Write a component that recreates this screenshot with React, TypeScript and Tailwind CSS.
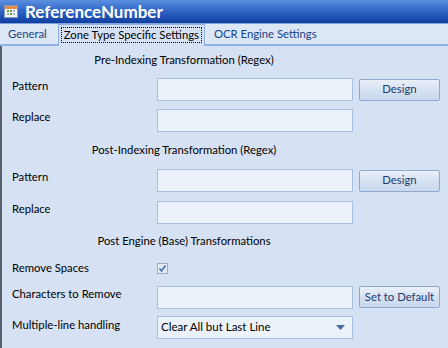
import React from "react";

const font = { fontFamily: 'Lato, "Liberation Sans", sans-serif' };

function Input({ children }: { children?: React.ReactNode }) {
  return (
    <div className="w-[196px] h-[23px] border border-[#a9bfdf] bg-[#ecf2fa] flex items-center px-[3px] text-[11.5px] text-black">
      {children}
    </div>
  );
}

function Btn({ label }: { label: string }) {
  return (
    <div className="ml-[6px] w-[81px] h-[22px] rounded-[2px] border border-[#8fa9d0] bg-gradient-to-b from-[#e9f0f9] via-[#d6e2f3] to-[#c9d8ee] flex items-center justify-center text-[11.3px] text-[#1e3a6e]">
      {label}
    </div>
  );
}

function Row({ label, children, h, pb = "pb-[6px]" }: { label: string; children?: React.ReactNode; h: string; pb?: string }) {
  return (
    <div className={`flex items-center ${h}`}>
      <div className={`w-[155px] pl-[10px] ${pb} text-[11.3px] text-black`}>{label}</div>
      {children}
    </div>
  );
}

function Header({ text }: { text: string }) {
  return <div className="h-[28px] flex items-center justify-center pr-[82px] text-[11.3px] text-black">{text}</div>;
}

export default function App() {
  return (
    <div className="w-[448px] h-[348px] flex flex-col overflow-hidden bg-[#d6e2f3]" style={font}>
      <div className="h-[24px] shrink-0 flex items-center bg-gradient-to-b from-[#5b8fe0] via-[#2e63c4] to-[#0f3e9e] border-b border-[#7fa3dc]">
        <svg width="14" height="13" viewBox="0 0 14 13" className="ml-[4px] mr-[7px]">
          <rect x="0.5" y="0.5" width="13" height="12" fill="#f4f6fb" stroke="#8a9bb8" />
          <rect x="1" y="1" width="12" height="3" fill="#e88a4a" />
          <rect x="3" y="5" width="2" height="2" fill="#6a9e3c" />
          <rect x="6" y="5" width="2" height="2" fill="#6a9e3c" />
          <rect x="9" y="5" width="2" height="2" fill="#a0b8d8" />
          <rect x="3" y="8" width="2" height="2" fill="#a0b8d8" />
          <rect x="6" y="8" width="2" height="2" fill="#6a9e3c" />
          <rect x="9" y="8" width="2" height="2" fill="#a0b8d8" />
        </svg>
        <span className="text-white font-bold text-[17px] leading-none">ReferenceNumber</span>
      </div>
      <div className="h-[22px] shrink-0 flex items-end bg-[#dce7f5] border-b-2 border-[#8db2e3] pl-[2px] text-[11.3px] text-[#15428b]">
        <div className="h-[20px] px-[6px] flex items-center">General</div>
        <div className="h-[22px] ml-[5px] mb-[-2px] px-[2px] pt-[2px] border border-b-0 border-[#8db2e3] bg-[#d6e2f3] flex items-start">
          <div className="px-[2px] border border-dotted border-black leading-[14px] text-black">Zone Type Specific Settings</div>
        </div>
        <div className="h-[20px] px-[9px] flex items-center">OCR Engine Settings</div>
      </div>
      <div className="flex-1 flex flex-col border-l-2 border-[#5a6270]">
        <Header text="Pre-Indexing Transformation (Regex)" />
        <Row label="Pattern" h="h-[31px]">
          <Input />
          <Btn label="Design" />
        </Row>
        <Row label="Replace" h="h-[31px]">
          <Input />
        </Row>
        <Header text="Post-Indexing Transformation (Regex)" />
        <Row label="Pattern" h="h-[33px]">
          <Input />
          <Btn label="Design" />
        </Row>
        <Row label="Replace" h="h-[30px]">
          <Input />
        </Row>
        <Header text="Post Engine (Base) Transformations" />
        <Row label="Remove Spaces" h="h-[26px]" pb="pb-0">
          <div className="w-[11px] h-[11px] border border-[#9aaecb] bg-[#e3eaf4] flex items-center justify-center">
            <svg width="9" height="9" viewBox="0 0 9 9">
              <path d="M1.5 4.5 L3.5 7 L7.5 1.5" stroke="#4a6fb0" strokeWidth="1.6" fill="none" />
            </svg>
          </div>
        </Row>
        <Row label="Characters to Remove" h="h-[32px]">
          <Input />
          <Btn label="Set to Default" />
        </Row>
        <Row label="Multiple-line handling" h="h-[28px]" pb="pb-[4px]">
          <div className="w-[196px] h-[23px] border border-[#a9bfdf] bg-[#ecf2fa] flex items-center justify-between px-[3px] text-[11.5px] text-black">
            <span>Clear All but Last Line</span>
            <svg width="9" height="5" viewBox="0 0 9 5" className="mr-[4px]">
              <path d="M0 0 H9 L4.5 5 Z" fill="#4a6a9c" />
            </svg>
          </div>
        </Row>
      </div>
    </div>
  );
}
